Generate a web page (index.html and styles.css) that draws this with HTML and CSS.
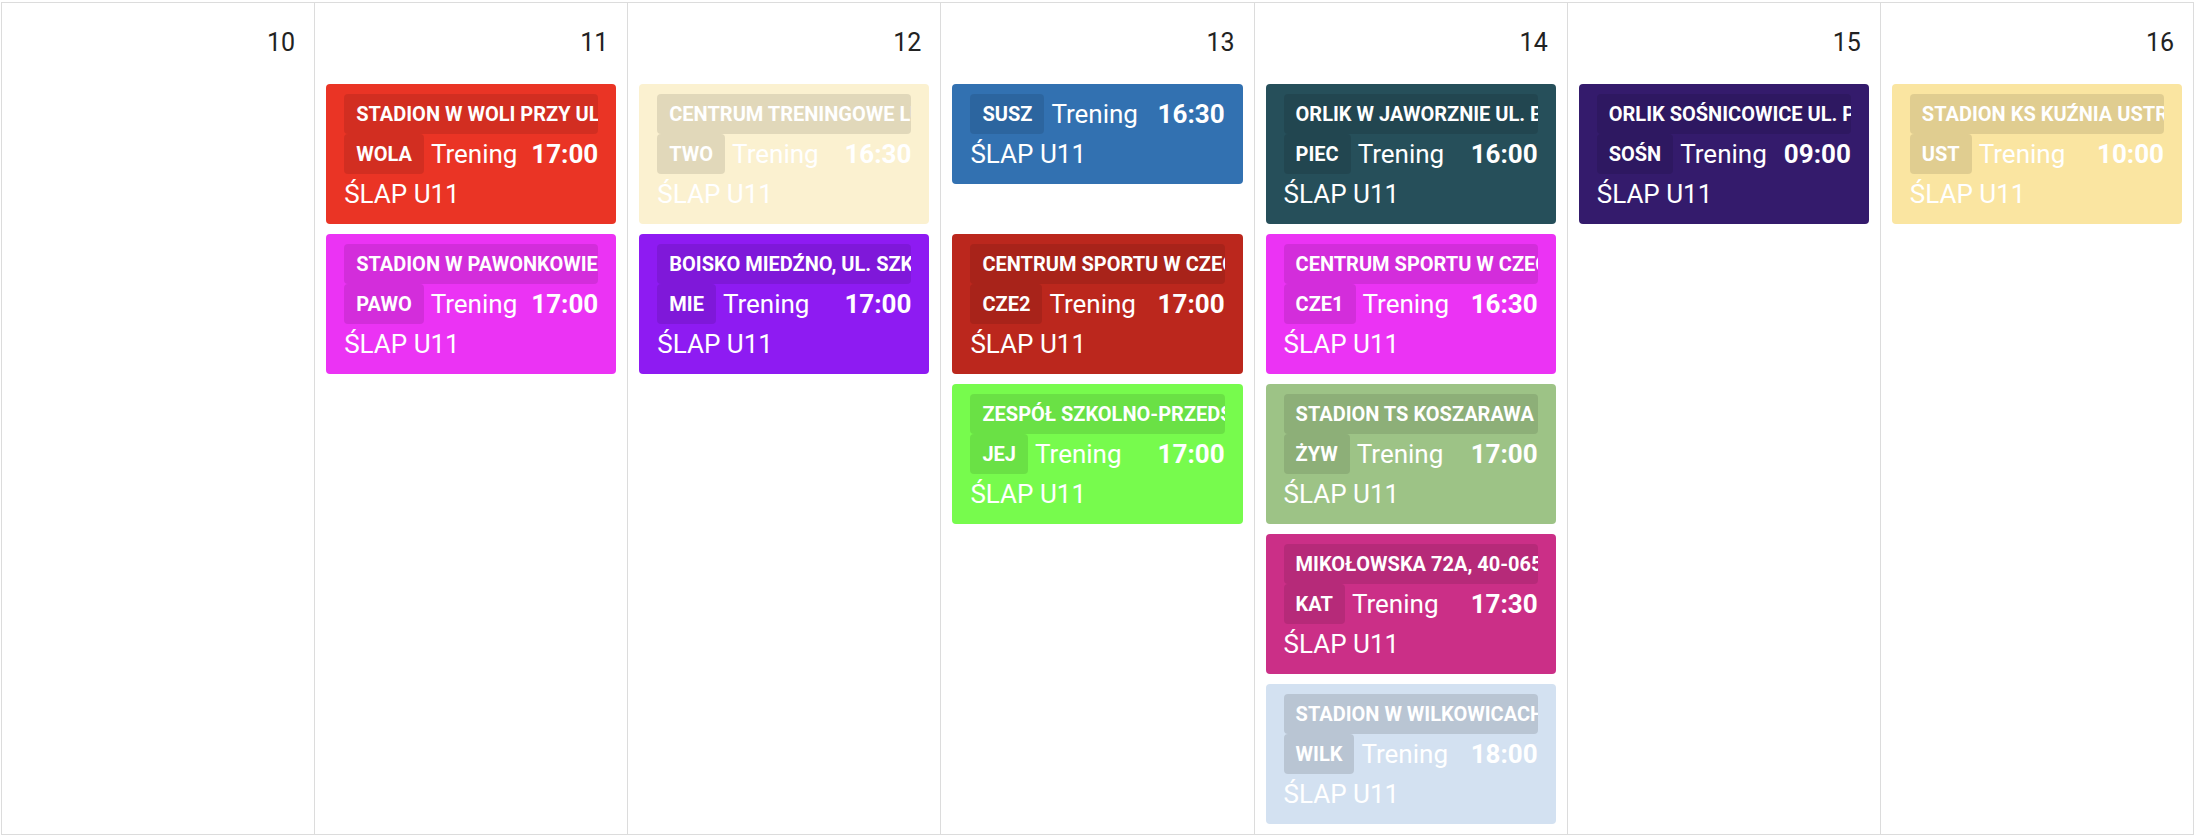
FILE: index.html
```html
<!DOCTYPE html>
<html lang="pl">
<head>
<meta charset="utf-8">
<title>Kalendarz</title>
<link rel="stylesheet" href="styles.css">
</head>
<body>
<div class="week">
  <div class="day">
    <div class="day-num">10</div>
    <div class="events"></div>
  </div>

  <div class="day">
    <div class="day-num">11</div>
    <div class="events">
      <div class="event c-red">
        <div class="loc"><span class="loc-text">Stadion w Woli przy ul. Pszczyńskiej</span></div>
        <div class="row"><span class="code">WOLA</span><span class="title">Trening</span><span class="time">17:00</span></div>
        <div class="team">ŚLAP U11</div>
      </div>
      <div class="event c-magenta">
        <div class="loc"><span class="loc-text">Stadion w Pawonkowie</span></div>
        <div class="row"><span class="code">PAWO</span><span class="title">Trening</span><span class="time">17:00</span></div>
        <div class="team">ŚLAP U11</div>
      </div>
    </div>
  </div>

  <div class="day">
    <div class="day-num">12</div>
    <div class="events">
      <div class="event c-cream">
        <div class="loc"><span class="loc-text">Centrum Treningowe Lubliniec</span></div>
        <div class="row"><span class="code">TWO</span><span class="title">Trening</span><span class="time">16:30</span></div>
        <div class="team">ŚLAP U11</div>
      </div>
      <div class="event c-violet">
        <div class="loc"><span class="loc-text">Boisko Miedźno, ul. Szkolna</span></div>
        <div class="row"><span class="code">MIE</span><span class="title">Trening</span><span class="time">17:00</span></div>
        <div class="team">ŚLAP U11</div>
      </div>
    </div>
  </div>

  <div class="day">
    <div class="day-num">13</div>
    <div class="events">
      <div class="event c-blue">
        <div class="row"><span class="code">SUSZ</span><span class="title">Trening</span><span class="time">16:30</span></div>
        <div class="team">ŚLAP U11</div>
      </div>
      <div class="event c-darkred">
        <div class="loc"><span class="loc-text">Centrum Sportu w Czechowicach</span></div>
        <div class="row"><span class="code">CZE2</span><span class="title">Trening</span><span class="time">17:00</span></div>
        <div class="team">ŚLAP U11</div>
      </div>
      <div class="event c-lime">
        <div class="loc"><span class="loc-text">Zespół Szkolno-Przedszkolny</span></div>
        <div class="row"><span class="code">JEJ</span><span class="title">Trening</span><span class="time">17:00</span></div>
        <div class="team">ŚLAP U11</div>
      </div>
    </div>
  </div>

  <div class="day">
    <div class="day-num">14</div>
    <div class="events">
      <div class="event c-teal">
        <div class="loc"><span class="loc-text">Orlik w Jaworznie ul. Batorego</span></div>
        <div class="row"><span class="code">PIEC</span><span class="title">Trening</span><span class="time">16:00</span></div>
        <div class="team">ŚLAP U11</div>
      </div>
      <div class="event c-magenta">
        <div class="loc"><span class="loc-text">Centrum Sportu w Czechowicach</span></div>
        <div class="row"><span class="code">CZE1</span><span class="title">Trening</span><span class="time">16:30</span></div>
        <div class="team">ŚLAP U11</div>
      </div>
      <div class="event c-sage">
        <div class="loc"><span class="loc-text">Stadion TS Koszarawa</span></div>
        <div class="row"><span class="code">ŻYW</span><span class="title">Trening</span><span class="time">17:00</span></div>
        <div class="team">ŚLAP U11</div>
      </div>
      <div class="event c-pink">
        <div class="loc"><span class="loc-text">Mikołowska 72A, 40-065 Katowice</span></div>
        <div class="row"><span class="code">KAT</span><span class="title">Trening</span><span class="time">17:30</span></div>
        <div class="team">ŚLAP U11</div>
      </div>
      <div class="event c-pale">
        <div class="loc"><span class="loc-text">Stadion w Wilkowicach</span></div>
        <div class="row"><span class="code">WILK</span><span class="title">Trening</span><span class="time">18:00</span></div>
        <div class="team">ŚLAP U11</div>
      </div>
    </div>
  </div>

  <div class="day">
    <div class="day-num">15</div>
    <div class="events">
      <div class="event c-indigo">
        <div class="loc"><span class="loc-text">Orlik Sośnicowice ul. Parkowa</span></div>
        <div class="row"><span class="code">SOŚN</span><span class="title">Trening</span><span class="time">09:00</span></div>
        <div class="team">ŚLAP U11</div>
      </div>
    </div>
  </div>

  <div class="day">
    <div class="day-num">16</div>
    <div class="events">
      <div class="event c-yellow">
        <div class="loc"><span class="loc-text">Stadion KS Kuźnia Ustroń</span></div>
        <div class="row"><span class="code">UST</span><span class="title">Trening</span><span class="time">10:00</span></div>
        <div class="team">ŚLAP U11</div>
      </div>
    </div>
  </div>
</div>
</body>
</html>
```

FILE: styles.css
```css
html, body {
  margin: 0;
  padding: 0;
  background: #ffffff;
}

body {
  font-family: Roboto, "Noto Sans", "Liberation Sans", sans-serif;
  color: #212121;
}

.week {
  display: grid;
  grid-template-columns: repeat(7, 1fr);
  width: 2193px;
  height: 833px;
  margin: 2px 0 0 1px;
  box-sizing: border-box;
  border-top: 1px solid #dcdcdc;
  border-left: 1px solid #dcdcdc;
}

.day {
  display: flex;
  flex-direction: column;
  min-width: 0;
  border-right: 1px solid #dcdcdc;
  border-bottom: 1px solid #dcdcdc;
  padding: 0 11px;
}

.day-num {
  text-align: right;
  font-size: 25px;
  line-height: 36px;
  padding: 22px 8px 23px 0;
  color: #222222;
}

.events {
  display: grid;
  grid-auto-rows: 140px;
  row-gap: 10px;
  align-items: start;
}

.event {
  border-radius: 4px;
  padding: 10px 18px;
  color: #ffffff;
  min-width: 0;
  overflow: hidden;
}

.loc {
  display: block;
  height: 40px;
  line-height: 40px;
  padding: 0 12px;
  border-radius: 4px;
  background: rgba(0, 0, 0, 0.1);
  font-size: 20px;
  font-weight: 700;
  text-transform: uppercase;
  white-space: nowrap;
  overflow: hidden;
  text-overflow: clip;
}

.row {
  display: flex;
  align-items: center;
  height: 40px;
}

.code {
  height: 40px;
  line-height: 40px;
  padding: 0 12px;
  border-radius: 4px;
  background: rgba(0, 0, 0, 0.1);
  font-size: 20px;
  font-weight: 700;
}

.title {
  font-size: 26px;
  margin-left: 7px;
}

.time {
  font-size: 26px;
  font-weight: 700;
  margin-left: auto;
}

.team {
  font-size: 26px;
  line-height: 40px;
}

.c-red { background: #ea3425; }
.c-magenta { background: #eb33f4; }
.c-cream { background: #fbf1d0; }
.c-violet { background: #8e1bf2; }
.c-blue { background: #3271b1; }
.c-darkred { background: #bb271d; }
.c-lime { background: #77fb4d; }
.c-teal { background: #264f5a; }
.c-sage { background: #9dc386; }
.c-pink { background: #cb2f87; }
.c-pale { background: #d3e1f1; }
.c-pale .loc, .c-pale .code { background: rgba(0, 0, 0, 0.12); }
.c-indigo { background: #341b6c; }
.c-yellow { background: #fae5a1; }
```
